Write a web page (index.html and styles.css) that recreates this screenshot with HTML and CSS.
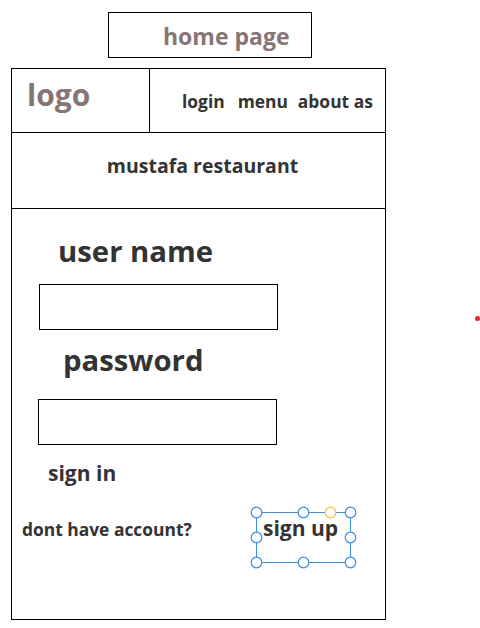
FILE: index.html
```html
<!DOCTYPE html>
<html>
<head>
<meta charset="utf-8">
<link rel="stylesheet" href="styles.css">
</head>
<body>
<div class="page">
  <div class="title-box"><span class="title">home page</span></div>
  <div class="frame">
    <div class="header">
      <div class="logo-cell">logo</div>
      <nav class="nav"><span class="nav-login">login</span><span class="nav-menu">menu</span><span>about as</span></nav>
    </div>
    <div class="banner">mustafa restaurant</div>
    <div class="form">
      <div class="label label-user">user name</div>
      <div class="input input-user"></div>
      <div class="label label-pass">password</div>
      <div class="input input-pass"></div>
      <div class="signin">sign in</div>
      <div class="account-row">
        <span class="no-account">dont have account?</span>
        <span class="signup">sign up
          <svg class="handles" width="107" height="63" viewBox="0 0 107 63">
            <g fill="#fff" stroke="#3a8fe6" stroke-width="1.2">
              <circle cx="6.5" cy="6.5" r="5.3"/>
              <circle cx="53.5" cy="6.5" r="5.3"/>
              <circle cx="100.5" cy="6.5" r="5.3"/>
              <circle cx="6.5" cy="31.5" r="5.3"/>
              <circle cx="100.5" cy="31.5" r="5.3"/>
              <circle cx="6.5" cy="56.5" r="5.3"/>
              <circle cx="53.5" cy="56.5" r="5.3"/>
              <circle cx="100.5" cy="56.5" r="5.3"/>
            </g>
            <circle cx="80.5" cy="6.5" r="5.3" fill="#fff" stroke="#f5c340" stroke-width="1.2"/>
          </svg>
        </span>
      </div>
    </div>
  </div>
  <span class="dot"></span>
</div>
</body>
</html>
```
FILE: styles.css
```css
* { box-sizing: border-box; }
html, body { margin: 0; padding: 0; background: #fff; }
body { font-family: "Open Sans", "Liberation Sans", sans-serif; font-weight: 700; color: #333; }
.page { position: relative; width: 480px; height: 628px; padding-top: 12px; }

.title-box {
  margin-left: 108px;
  width: 204px;
  height: 46px;
  border: 1px solid #000;
  padding: 12px 0 0 54px;
}
.title { display: block; font-size: 23px; line-height: 23px; color: #877575; }

.frame {
  margin-top: 10px;
  margin-left: 11px;
  width: 375px;
  border: 1px solid #000;
}
.header { display: flex; height: 64px; border-bottom: 1px solid #000; }
.logo-cell {
  width: 138px;
  border-right: 1px solid #000;
  padding: 11px 0 0 15px;
  font-size: 30px;
  line-height: 30px;
  color: #877575;
}
.nav {
  flex: 1;
  display: flex;
  border-top: 1px solid #000;
  margin-top: -1px;
  padding: 24px 0 0 32px;
  font-size: 17.4px;
  line-height: 17px;
  align-items: flex-start;
}
.nav-login { margin-right: 13px; }
.nav-menu { margin-right: 10px; }

.banner {
  height: 76px;
  border-bottom: 1px solid #000;
  text-align: center;
  font-size: 19.5px;
  line-height: 20px;
  padding-top: 23px;
  padding-left: 8px;
}

.form { height: 410px; padding-top: 27px; }
.label { font-size: 29.3px; line-height: 30px; }
.label-user { margin-left: 46px; }
.label-pass { margin-left: 51px; margin-top: 15px; }
.input { width: 239px; height: 46px; border: 1px solid #000; }
.input-user { margin-left: 27px; margin-top: 18px; }
.input-pass { margin-left: 26px; margin-top: 24px; }
.signin { margin-left: 36px; margin-top: 18px; font-size: 21px; line-height: 21px; }

.account-row {
  display: grid;
  grid-template-columns: 234px 95px;
  align-items: baseline;
  margin-top: 28px;
  padding-left: 10px;
}
.no-account { font-size: 17.4px; line-height: 17px; }
.signup {
  position: relative;
  height: 51px;
  border: 1px solid #3a8fe6;
  padding: 5px 0 0 6px;
  font-size: 21px;
  line-height: 21px;
}
.handles { position: absolute; left: -7px; top: -7px; }

.dot {
  position: absolute;
  left: 475px;
  top: 316px;
  width: 5px;
  height: 5px;
  border-radius: 50%;
  background: #e8222a;
}
```
